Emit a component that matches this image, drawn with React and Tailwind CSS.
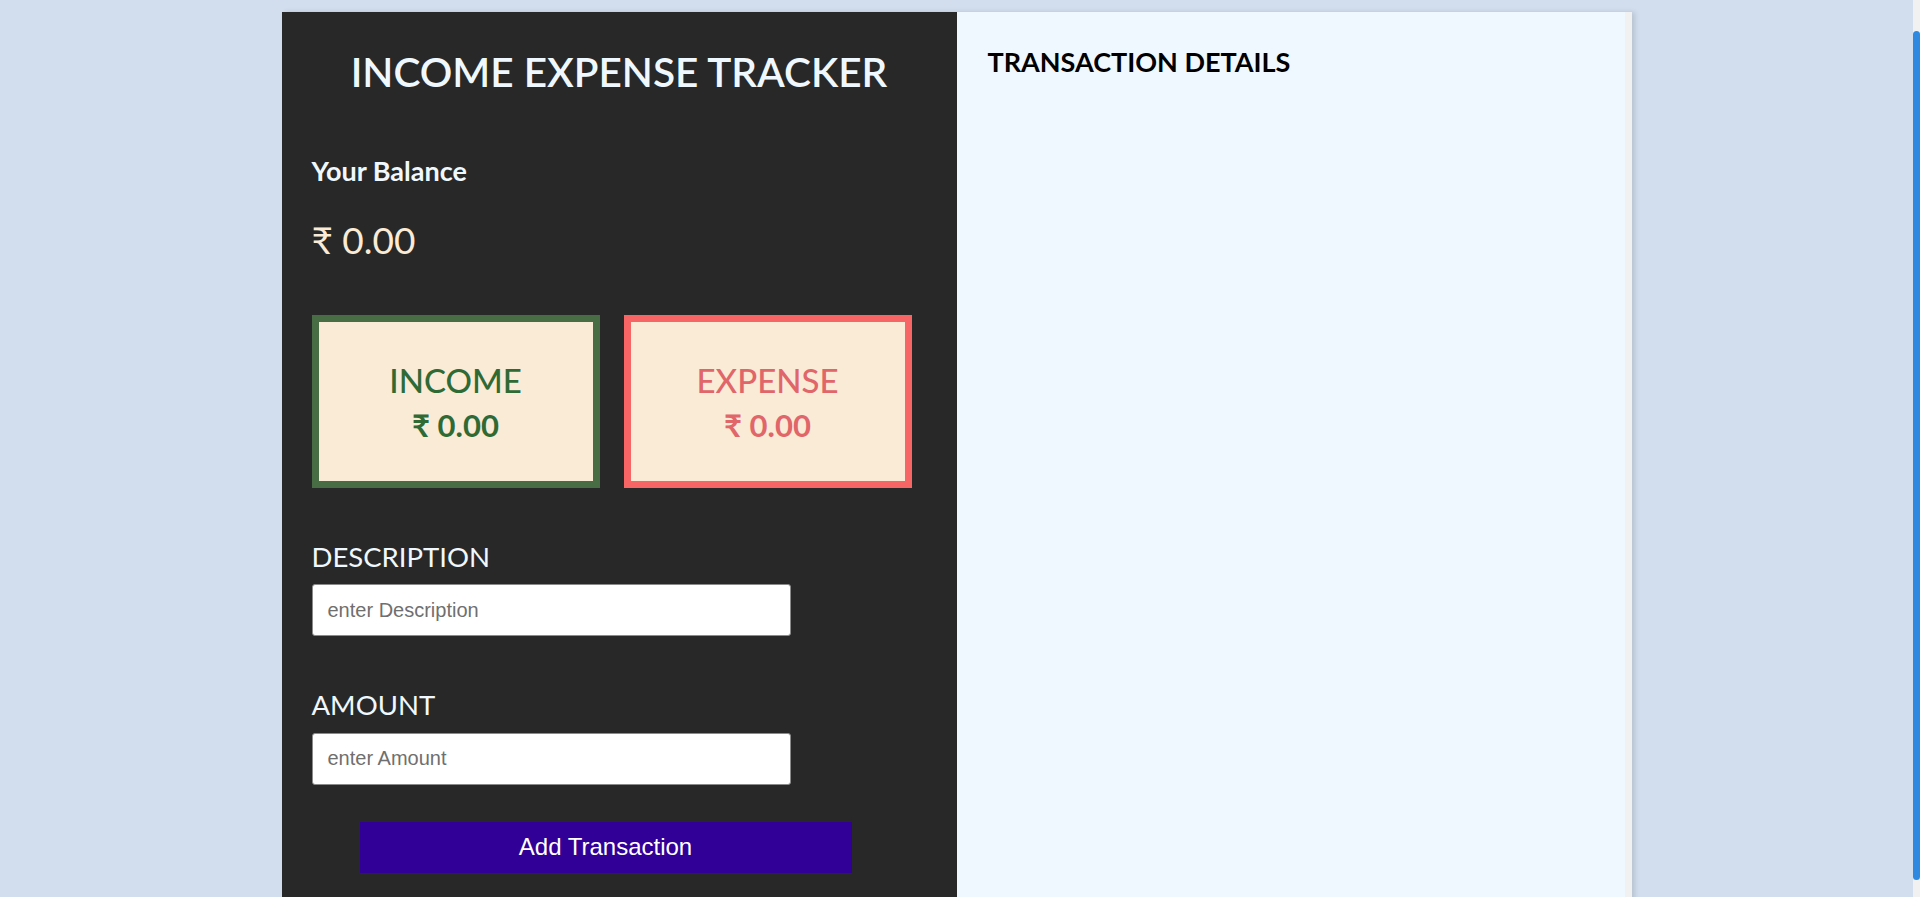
const heading = "font-['Lato','Noto_Sans','DejaVu_Sans',sans-serif]"

const AmountCard = ({ label, border, color }) => (
  <div className={`w-[288px] h-[173px] border-[7px] ${border} bg-[#faebd7] flex flex-col items-center pt-[42px]`}>
    <p className={`${heading} ${color} text-[33px] leading-none font-medium`}>{label}</p>
    <p className={`${heading} ${color} text-[31px] leading-none font-bold mt-[13px]`}>₹ 0.00</p>
  </div>
)

const Field = ({ label, placeholder, className = '' }) => (
  <div className={className}>
    <label className={`${heading} block text-[27.5px] leading-none text-[#f0f8ff]`}>{label}</label>
    <input
      placeholder={placeholder}
      className="mt-[14px] w-[479px] h-[52px] bg-white rounded-[3px] border border-[#8a8a8a]
                 pl-[15px] font-['Liberation_Sans',Arial,sans-serif] text-[20px]
                 placeholder:text-[#6f6f6f] outline-none"
    />
  </div>
)

const App = () => {
  return (
    <div className="flex h-[897px] overflow-hidden bg-[#d2deee]">

      {/* Contenido */}
      <div className="flex-1 pt-3">
        <div className="mx-auto w-[1350px] flex shadow-[3px_0_5px_rgba(0,0,0,0.12)]">

          {/* Panel izquierdo */}
          <div className="w-[675px] h-[960px] bg-[#282828] pt-[40px] pl-[30px]">
            <h1 className={`${heading} text-center pr-[30px] text-[40.5px] leading-none font-semibold text-[#f0f8ff]`}>
              INCOME EXPENSE TRACKER
            </h1>

            <p className={`${heading} mt-[64px] text-[27px] leading-none font-bold text-[#f0f8ff]`}>
              Your Balance
            </p>
            <p className={`${heading} mt-[37px] text-[37px] leading-none text-[#faebd7]`}>
              ₹ 0.00
            </p>

            <div className="mt-[57px] flex gap-[24px]">
              <AmountCard label="INCOME" border="border-[#486c44]" color="text-[#2f6a35]" />
              <AmountCard label="EXPENSE" border="border-[#f76565]" color="text-[#e0666a]" />
            </div>

            <Field label="DESCRIPTION" placeholder="enter Description" className="mt-[55px]" />
            <Field label="AMOUNT" placeholder="enter Amount" className="mt-[55px]" />

            <button
              className="mt-[37px] ml-[48px] w-[492px] h-[51px] bg-[#310096] text-white
                         font-['Liberation_Sans',Arial,sans-serif] text-[24px]"
            >
              Add Transaction
            </button>
          </div>

          {/* Panel derecho */}
          <div className="w-[675px] flex bg-[#f0f8ff]">
            <div className="flex-1 pt-[36px] pl-[31px]">
              <h2 className={`${heading} text-[27px] leading-none font-bold text-black`}>
                TRANSACTION DETAILS
              </h2>
            </div>
            <div className="w-[7px] bg-[#f1f1f1]" />
          </div>
        </div>
      </div>

      {/* Barra de desplazamiento */}
      <div className="w-[7px] bg-[#f1f1f1] pt-[31px] pb-[17px]">
        <div className="h-full rounded-full bg-[#2f89e0]" />
      </div>
    </div>
  )
}

export default App
